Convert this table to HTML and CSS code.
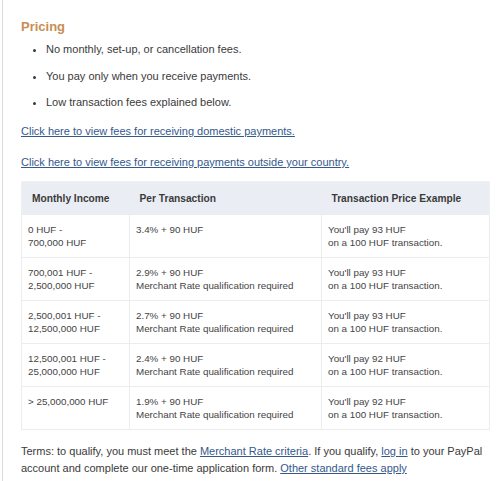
FILE: index.html
```html
<!DOCTYPE html>
<html>
<head>
<meta charset="utf-8">
<link rel="stylesheet" href="styles.css">
</head>
<body>
<div class="panel">
  <h2 class="title">Pricing</h2>
  <ul class="points">
    <li>No monthly, set-up, or cancellation fees.</li>
    <li>You pay only when you receive payments.</li>
    <li>Low transaction fees explained below.</li>
  </ul>
  <p class="linkline"><a href="#">Click here to view fees for receiving domestic payments.</a></p>
  <p class="linkline second"><a href="#">Click here to view fees for receiving payments outside your country.</a></p>
  <table class="fees">
    <thead>
      <tr><th class="c1">Monthly Income</th><th class="c2">Per Transaction</th><th class="c3">Transaction Price Example</th></tr>
    </thead>
    <tbody>
      <tr><td>0 HUF -<br>700,000 HUF</td><td>3.4% + 90 HUF</td><td>You'll pay 93 HUF<br>on a 100 HUF transaction.</td></tr>
      <tr><td>700,001 HUF -<br>2,500,000 HUF</td><td>2.9% + 90 HUF<br>Merchant Rate qualification required</td><td>You'll pay 93 HUF<br>on a 100 HUF transaction.</td></tr>
      <tr><td>2,500,001 HUF -<br>12,500,000 HUF</td><td>2.7% + 90 HUF<br>Merchant Rate qualification required</td><td>You'll pay 93 HUF<br>on a 100 HUF transaction.</td></tr>
      <tr><td>12,500,001 HUF -<br>25,000,000 HUF</td><td>2.4% + 90 HUF<br>Merchant Rate qualification required</td><td>You'll pay 92 HUF<br>on a 100 HUF transaction.</td></tr>
      <tr><td>&gt; 25,000,000 HUF</td><td>1.9% + 90 HUF<br>Merchant Rate qualification required</td><td>You'll pay 92 HUF<br>on a 100 HUF transaction.</td></tr>
    </tbody>
  </table>
  <p class="terms">Terms: to qualify, you must meet the <a href="#">Merchant Rate criteria</a>. If you qualify, <a href="#">log in</a> to your PayPal account and complete our one-time application form. <a href="#">Other standard fees apply</a></p>
</div>
</body>
</html>
```
FILE: styles.css
```css
html, body {
  margin: 0;
  padding: 0;
  background: #fff;
}
body {
  font-family: "Liberation Sans", Arial, sans-serif;
  color: #3a3a3a;
  font-size: 11px;
}
.panel {
  margin-left: 2px;
  border-left: 1px solid #dcdcdc;
  padding: 19px 11px 20px 18px;
  min-height: 442px;
}
.title {
  margin: 0;
  font-size: 13px;
  line-height: 16px;
  font-weight: bold;
  color: #c98d52;
}
.points {
  margin: 6px 0 0 0;
  padding-left: 25px;
  list-style: disc;
}
.points li {
  line-height: 16px;
  margin-bottom: 10.5px;
}
.points li:last-child {
  margin-bottom: 0;
}
.linkline {
  margin: 13px 0 0 0;
  line-height: 16px;
}
.linkline.second {
  margin-top: 15px;
}
a {
  color: #34598c;
  text-decoration: underline;
}
.fees {
  margin-top: 11px;
  width: 468px;
  border-collapse: collapse;
  border: 1px solid #f0f0f0;
  font-size: 9.8px;
  table-layout: fixed;
}
.fees th {
  background: #eaeef4;
  font-weight: bold;
  text-align: left;
  height: 33px;
  padding: 0 0 0 10px;
  color: #3a3a3a;
  box-sizing: border-box;
  font-size: 10.2px;
}
.fees .c1 { width: 108px; }
.fees .c2 { width: 192px; }
.fees .c3 { width: 168px; }
.fees td {
  vertical-align: top;
  height: 43px;
  box-sizing: border-box;
  padding: 8px 6px 0 6px;
  line-height: 13px;
  border: 1px solid #ececec;
  color: #444;
}
.terms {
  margin: 13px 0 0 0;
  line-height: 17px;
  font-size: 11px;
}
```
